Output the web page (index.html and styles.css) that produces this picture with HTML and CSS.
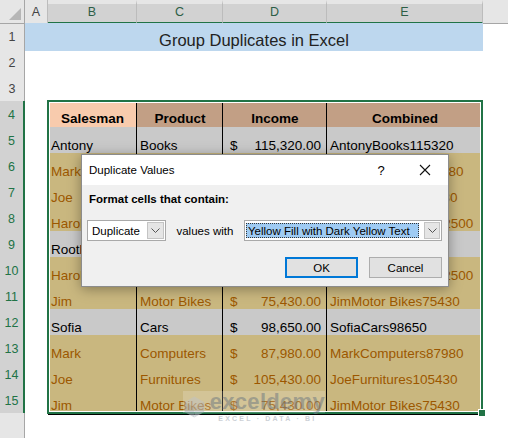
FILE: index.html
```html
<!DOCTYPE html>
<html lang="en">
<head>
    <meta charset="UTF-8">
    <title>Group Duplicates in Excel</title>
    <link rel="stylesheet" href="styles.css">
</head>
<body>

<div class="sheet">
    <!-- column headers -->
    <div class="row hdr-row">
        <div class="corner"><span class="tri"></span></div>
        <div class="colh">A</div>
        <div class="colh sel">B</div>
        <div class="colh sel">C</div>
        <div class="colh sel">D</div>
        <div class="colh sel">E</div>
        <div class="colh rest"></div>
    </div>

    <div class="row">
        <div class="rh">1</div>
        <div class="title">Group Duplicates in Excel</div>
    </div>
    <div class="row"><div class="rh">2</div></div>
    <div class="row"><div class="rh">3</div></div>

    <div class="row">
        <div class="rh sel">4</div><div></div>
        <div class="c th peach">Salesman</div>
        <div class="c th brown">Product</div>
        <div class="c th brown">Income</div>
        <div class="c th brown">Combined</div>
    </div>
    <div class="row">
        <div class="rh sel">5</div><div></div>
        <div class="c gray">Antony</div>
        <div class="c gray">Books</div>
        <div class="c gray money"><span>$</span><span>115,320.00</span></div>
        <div class="c gray">AntonyBooks115320</div>
    </div>
    <div class="row">
        <div class="rh sel">6</div><div></div>
        <div class="c dup">Mark</div>
        <div class="c dup">Computers</div>
        <div class="c dup money"><span>$</span><span>87,980.00</span></div>
        <div class="c dup">MarkComputers87980</div>
    </div>
    <div class="row">
        <div class="rh sel">7</div><div></div>
        <div class="c dup">Joe</div>
        <div class="c dup">Furnitures</div>
        <div class="c dup money"><span>$</span><span>105,430.00</span></div>
        <div class="c dup">JoeFurnitures105430</div>
    </div>
    <div class="row">
        <div class="rh sel">8</div><div></div>
        <div class="c dup">Harold</div>
        <div class="c dup">Computers</div>
        <div class="c dup money"><span>$</span><span>82,500.00</span></div>
        <div class="c dup">HaroldComputers82500</div>
    </div>
    <div class="row">
        <div class="rh sel">9</div><div></div>
        <div class="c gray">Rooth</div>
        <div class="c gray">Cars</div>
        <div class="c gray money"><span>$</span><span>65,200.00</span></div>
        <div class="c gray">RoothCars65200</div>
    </div>
    <div class="row">
        <div class="rh sel">10</div><div></div>
        <div class="c dup">Harold</div>
        <div class="c dup">Computers</div>
        <div class="c dup money"><span>$</span><span>82,500.00</span></div>
        <div class="c dup">HaroldComputers82500</div>
    </div>
    <div class="row">
        <div class="rh sel">11</div><div></div>
        <div class="c dup">Jim</div>
        <div class="c dup">Motor Bikes</div>
        <div class="c dup money"><span>$</span><span>75,430.00</span></div>
        <div class="c dup">JimMotor Bikes75430</div>
    </div>
    <div class="row">
        <div class="rh sel">12</div><div></div>
        <div class="c gray">Sofia</div>
        <div class="c gray">Cars</div>
        <div class="c gray money"><span>$</span><span>98,650.00</span></div>
        <div class="c gray">SofiaCars98650</div>
    </div>
    <div class="row">
        <div class="rh sel">13</div><div></div>
        <div class="c dup">Mark</div>
        <div class="c dup">Computers</div>
        <div class="c dup money"><span>$</span><span>87,980.00</span></div>
        <div class="c dup">MarkComputers87980</div>
    </div>
    <div class="row">
        <div class="rh sel">14</div><div></div>
        <div class="c dup">Joe</div>
        <div class="c dup">Furnitures</div>
        <div class="c dup money"><span>$</span><span>105,430.00</span></div>
        <div class="c dup">JoeFurnitures105430</div>
    </div>
    <div class="row">
        <div class="rh sel">15</div><div></div>
        <div class="c dup">Jim</div>
        <div class="c dup">Motor Bikes</div>
        <div class="c dup money"><span>$</span><span>75,430.00</span></div>
        <div class="c dup">JimMotor Bikes75430</div>
    </div>
    <div class="row tail"><div class="rh"></div></div>

    <!-- selected range B4:E15 -->
    <div class="selection"></div>
    <div class="handle"></div>

    <!-- watermark -->
    <div class="watermark">
        <svg class="wm-logo" width="28" height="28" viewBox="0 0 28 28">
            <polygon points="14,1 26,8 14,15 2,8" fill="#c9ced6"/>
            <polygon points="2,8 14,15 14,27 2,20" fill="#aeb5c0"/>
            <polygon points="26,8 14,15 14,27 26,20" fill="#bcc2cc"/>
        </svg>
        <div class="wm-text">
            <div class="wm-name">exceldemy</div>
            <div class="wm-sub">EXCEL · DATA · BI</div>
        </div>
    </div>

    <!-- Duplicate Values dialog -->
    <div class="dialog">
        <div class="dlg-title">
            <span class="dlg-name">Duplicate Values</span>
            <span class="help">?</span>
            <span class="close">
                <svg width="12" height="12" viewBox="0 0 12 12">
                    <path d="M1 1 L11 11 M11 1 L1 11" stroke="#111" stroke-width="1.1"/>
                </svg>
            </span>
        </div>
        <div class="dlg-body">
            <div class="dlg-label">Format cells that contain:</div>
            <div class="dlg-line">
                <div class="combo small">
                    <span class="combo-text">Duplicate</span>
                    <span class="arrow">
                        <svg width="9" height="5" viewBox="0 0 9 5"><path d="M0.5 0.5 L4.5 4.5 L8.5 0.5" fill="none" stroke="#555"/></svg>
                    </span>
                </div>
                <span class="values-with">values with</span>
                <div class="combo wide">
                    <span class="combo-text picked">Yellow Fill with Dark Yellow Text</span>
                    <span class="arrow">
                        <svg width="9" height="5" viewBox="0 0 9 5"><path d="M0.5 0.5 L4.5 4.5 L8.5 0.5" fill="none" stroke="#555"/></svg>
                    </span>
                </div>
            </div>
            <div class="dlg-buttons">
                <a class="btn btn-default">OK</a>
                <a class="btn">Cancel</a>
            </div>
        </div>
    </div>
</div>

</body>
</html>
```

FILE: styles.css
```css
/* Sheet */
body {
    margin: 0;
    padding: 0;
    background: #fff;
    font-family: "Liberation Sans", Arial, sans-serif;
    color: #000;
}

.sheet {
    position: relative;
    width: 508px;
    height: 438px;
    overflow: hidden;
}

.row {
    display: grid;
    grid-template-columns: 25px 23px 89px 86px 104px 156px 1fr;
    height: 26px;
}

.row > div {
    box-sizing: border-box;
}

.hdr-row {
    height: 23px;
}

.corner {
    position: relative;
    background: #e6e6e6;
    border-right: 1px solid #a6a6a6;
    border-bottom: 1px solid #a6a6a6;
}

.tri {
    position: absolute;
    right: 3px;
    bottom: 3px;
    width: 0;
    height: 0;
    border-left: 12px solid transparent;
    border-bottom: 12px solid #b6b6b6;
}

.colh {
    background: #e6e6e6;
    border-right: 1px solid #bcbcbc;
    border-bottom: 1px solid #a6a6a6;
    color: #444;
    font-size: 12.5px;
    line-height: 22px;
    padding-top: 1px;
    text-align: center;
}

.colh.sel {
    background: #d2d2d2;
    border-top: 4px solid #e6e6e6;
    border-bottom: 2px solid #217346;
    color: #2d5e46;
    line-height: 17px;
    padding-top: 0;
}

.colh.rest {
    border-right: none;
}

.rh {
    background: #e6e6e6;
    border-right: 1px solid #a6a6a6;
    border-bottom: 1px solid #c8c8c8;
    color: #444;
    font-size: 12.5px;
    line-height: 26px;
    padding-top: 1px;
    text-align: center;
}

.rh.sel {
    background: #d2d2d2;
    color: #217346;
    border-right: 2px solid #217346;
    border-bottom-color: #bdbdbd;
}

.tail {
    height: 25px;
}

.tail .rh {
    border-bottom: none;
}

.title {
    grid-column: 2 / 7;
    background: #bdd7ee;
    font-size: 16.5px;
    color: #222;
    display: flex;
    align-items: flex-end;
    justify-content: center;
    line-height: 20px;
    padding-bottom: 1px;
}

/* Table cells */
.c {
    display: flex;
    align-items: flex-end;
    border-right: 1px solid #000;
    border-bottom: 1px solid #000;
    padding: 0 2px 0 3px;
    font-size: 13.5px;
    line-height: 17px;
    white-space: nowrap;
}

.th {
    font-weight: bold;
    justify-content: center;
    padding-bottom: 1px;
}

.peach {
    background: #f8cbad;
}

.brown {
    background: #c29f85;
}

.gray {
    background: #c9c9c9;
}

.dup {
    background: #c9b77f;
    color: #9c5700;
}

.money {
    justify-content: space-between;
    padding: 0 5px 0 7px;
}

.selection {
    position: absolute;
    left: 47px;
    top: 100px;
    width: 436px;
    height: 314px;
    border: 2px solid #217346;
    box-shadow: inset 0 0 0 1px #fff;
    box-sizing: border-box;
}

.handle {
    position: absolute;
    left: 479px;
    top: 410px;
    width: 6px;
    height: 6px;
    background: #217346;
    outline: 1px solid #fff;
}

/* Watermark */
.watermark {
    position: absolute;
    left: 183px;
    top: 391px;
    width: 142px;
    height: 32px;
    display: flex;
    align-items: flex-start;
    gap: 4px;
    opacity: 0.55;
}

.watermark::before {
    content: "";
    position: absolute;
    left: 0;
    top: 0;
    width: 142px;
    height: 22px;
    background: rgba(255, 255, 255, 0.35);
}

.wm-logo {
    position: relative;
    margin-top: 2px;
}

.wm-text {
    position: relative;
    display: flex;
    flex-direction: column;
    align-items: center;
}

.wm-name {
    font-size: 22px;
    font-weight: bold;
    color: #7d8896;
    line-height: 22px;
    letter-spacing: 0.3px;
}

.wm-sub {
    font-size: 7px;
    font-weight: bold;
    color: #a4abb5;
    letter-spacing: 2.2px;
    line-height: 9px;
    margin-top: 1px;
}

/* Dialog */
.dialog {
    position: absolute;
    left: 81px;
    top: 154px;
    width: 368px;
    height: 133px;
    box-sizing: border-box;
    background: #f0f0f0;
    border: 1px solid #8c8c8c;
    box-shadow: 0 2px 12px rgba(0, 0, 0, 0.35);
    font-size: 11.5px;
    color: #000;
}

.dlg-title {
    height: 30px;
    background: #fff;
    display: flex;
    align-items: center;
    padding-left: 7px;
}

.dlg-name {
    flex: 1;
}

.help {
    width: 20px;
    text-align: center;
    font-size: 13px;
    margin-right: 22px;
}

.close {
    width: 24px;
    height: 12px;
    display: flex;
    justify-content: center;
    margin-right: 11px;
}

.dlg-body {
    padding: 7px 6px 0 5px;
}

.dlg-label {
    font-weight: bold;
    line-height: 14px;
    padding-left: 2px;
}

.dlg-line {
    display: flex;
    align-items: center;
    margin-top: 14px;
}

.combo {
    display: flex;
    align-items: center;
    height: 21px;
    box-sizing: border-box;
    background: #fff;
    border: 1px solid #a9a9a9;
    padding: 1px;
}

.combo.small {
    width: 80px;
}

.combo.wide {
    width: 198px;
}

.combo-text {
    flex: 1;
    padding-left: 3px;
    white-space: nowrap;
}

.combo-text.picked {
    flex: none;
    width: 173px;
    height: 15px;
    line-height: 15px;
    box-sizing: border-box;
    margin-right: 5px;
    padding-left: 1px;
    background: #9fcbf3;
    border: 1px dotted #333;
}

.arrow {
    width: 17px;
    height: 17px;
    box-sizing: border-box;
    background: #e5e5e5;
    border: 1px solid #c4c4c4;
    display: flex;
    align-items: center;
    justify-content: center;
    margin-left: auto;
}

.values-with {
    width: 68px;
    margin-left: 10px;
}

.dlg-buttons {
    display: flex;
    justify-content: flex-end;
    gap: 11px;
    margin-top: 16px;
}

.btn {
    width: 73px;
    height: 21px;
    box-sizing: border-box;
    background: #e1e1e1;
    border: 1px solid #adadad;
    display: flex;
    align-items: center;
    justify-content: center;
    cursor: pointer;
}

.btn-default {
    border: 2px solid #0078d7;
}
```
